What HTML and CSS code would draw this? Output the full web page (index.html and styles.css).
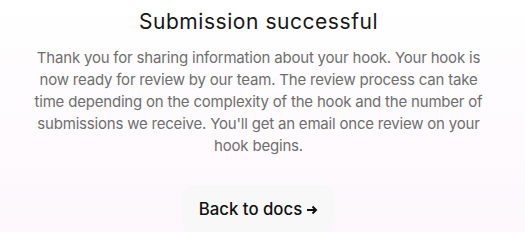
FILE: index.html
```html
<!DOCTYPE html>
<html lang="en">
<head>
    <meta charset="UTF-8">
    <meta name="viewport" content="width=device-width, initial-scale=1.0">
    <title>Submission successful</title>
    <link rel="stylesheet" href="styles.css">
</head>
<body>

    <div class="success">
        <h2 class="success-title">Submission successful</h2>
        <p class="success-text">
            Thank you for sharing information about your hook. Your hook is
            now ready for review by our team. The review process can take
            time depending on the complexity of the hook and the number of
            submissions we receive. You'll get an email once review on your
            hook begins.
        </p>
        <a href="#" class="back-btn">Back to docs
            <svg class="arrow" width="12" height="10" viewBox="0 0 12 10">
                <path d="M1 5h9M6.5 1.5L10 5l-3.5 3.5" fill="none" stroke="#111" stroke-width="2"/>
            </svg>
        </a>
    </div>

</body>
</html>
```

FILE: styles.css
```css
html, body {
    height: 100%;
}
body {
    font-family: Inter, 'Noto Sans', sans-serif;
    background: linear-gradient(to bottom, #ffffff, #fdf7fc);
    margin: 0;
    padding: 0;
}
.success {
    display: flex;
    flex-direction: column;
    align-items: center;
    padding: 8px 8px 0 0;
}
.success-title {
    margin: 0;
    font-size: 21px;
    font-weight: 400;
    letter-spacing: 0.55px;
    color: #161616;
    line-height: 28px;
}
.success-text {
    width: 470px;
    margin: 11px 0 0;
    text-align: center;
    font-size: 15px;
    letter-spacing: -0.2px;
    line-height: 22px;
    color: #6e6e6e;
}
.back-btn {
    display: flex;
    align-items: center;
    gap: 4px;
    margin-top: 28px;
    padding: 12px 17px;
    background: #f7f8f7;
    border-radius: 13px;
    color: #111;
    font-size: 16.8px;
    font-weight: 500;
    line-height: 24px;
    text-decoration: none;
}
.arrow {
    margin-top: 2px;
}
```
